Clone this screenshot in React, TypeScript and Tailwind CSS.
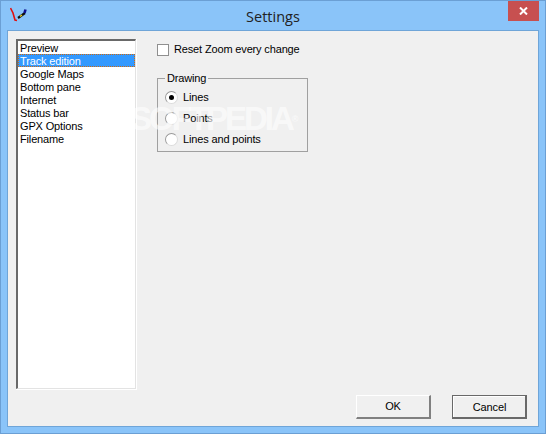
const items = ['Preview', 'Track edition', 'Google Maps', 'Bottom pane', 'Internet', 'Status bar', 'GPX Options', 'Filename'];

function Radio({ label, checked }: { label: string; checked?: boolean }) {
  return (
    <div className="flex items-center h-[13px] gap-[5px]">
      <span className="w-[13px] h-[13px] rounded-full border border-t-[#9a9a9a] border-l-[#9a9a9a] border-r-[#dcdcdc] border-b-[#dcdcdc] bg-white flex items-center justify-center">
        {checked && <span className="w-[5px] h-[5px] rounded-full bg-black" />}
      </span>
      <span>{label}</span>
    </div>
  );
}

function Button({ label, isDefault }: { label: string; isDefault?: boolean }) {
  if (isDefault) {
    return (
      <div className="w-[75px] h-[24px] border border-r-2 border-b-2 border-[#696969] bg-[#f0f0f0]">
        <div className="h-full flex items-center justify-center border-t border-l border-white">{label}</div>
      </div>
    );
  }
  return (
    <div className="w-[75px] h-[24px] flex items-center justify-center bg-[#f0f0f0] border-t border-l border-t-white border-l-white border-r-2 border-b-2 border-r-[#808080] border-b-[#808080]">
      {label}
    </div>
  );
}

export default function App() {
  return (
    <div className="w-[546px] h-[434px] flex flex-col bg-[#8ac4f9] border border-[#6b9fd4] text-[11px] leading-[13px] tracking-[-0.15px] text-black overflow-hidden font-['Liberation_Sans',sans-serif]">
      {/* Title bar */}
      <div className="h-[29px] flex shrink-0">
        <svg className="ml-[9px] mt-[6px]" width="18" height="16" viewBox="0 0 18 16" fill="none">
          <path d="M0.5 1 L3 6 L5 13 L7 13.5" stroke="#e01010" strokeWidth="1.6" />
          <path d="M8 11 L15 6" stroke="#111" strokeWidth="2.2" />
          <path d="M10 9.5 L12 8" stroke="#e8d020" strokeWidth="1.5" />
          <path d="M14.5 6 L15.5 2.5" stroke="#101090" strokeWidth="2.6" />
        </svg>
        <div className="flex-1 flex justify-center pt-[8px] pl-[10px] text-[#222] text-[14.5px] leading-[16px] tracking-normal font-['Open_Sans',sans-serif]">Settings</div>
        <div className="w-[31px] h-[20px] mr-[6px] bg-[#c75050] flex items-center justify-center">
          <svg width="9" height="8" viewBox="0 0 9 8" stroke="#fff" strokeWidth="2" fill="none">
            <path d="M1 0.5 L8 7.5 M8 0.5 L1 7.5" />
          </svg>
        </div>
      </div>

      {/* Client area */}
      <div className="relative mx-[6px] mb-[6px] flex-1 bg-[#f0f0f0] border border-[#6fa5d8] flex flex-col">
        <div className="flex flex-1 pt-[8px] pl-[8px]">
          {/* Category list */}
          <div className="w-[121px] h-[351px] border-r border-b border-white">
            <div className="h-full bg-white border-t-2 border-l-2 border-r border-b border-t-[#696969] border-l-[#696969] border-r-[#e3e3e3] border-b-[#e3e3e3]">
              {items.map((item) => (
                <div
                  key={item}
                  className={
                    item === 'Track edition'
                      ? 'h-[13px] pl-[1px] leading-[13px] bg-[#3399ff] text-white border border-dotted border-[#d06a10]'
                      : 'h-[13px] pl-[2px] leading-[15px]'
                  }
                >
                  {item}
                </div>
              ))}
            </div>
          </div>

          {/* Options */}
          <div className="ml-[20px] pt-[4px] flex flex-col">
            <div className="flex items-center gap-[5px]">
              <span className="w-[12px] h-[12px] bg-white border border-[#8f8f8f]" />
              <span>Reset Zoom every change</span>
            </div>
            <fieldset className="mt-[16px] w-[151px] h-[80px] border border-[#a0a0a0] pl-[7px] pt-[6px] flex flex-col gap-[8px]">
              <legend className="px-[2px]">Drawing</legend>
              <Radio label="Lines" checked />
              <Radio label="Points" />
              <Radio label="Lines and points" />
            </fieldset>
          </div>
        </div>

        {/* Dialog buttons */}
        <div className="flex justify-end gap-[21px] pr-[11px] pb-[7px]">
          <Button label="OK" />
          <Button label="Cancel" isDefault />
        </div>

        {/* Watermark */}
        <div className="absolute left-[122px] top-[70px] text-[33px] leading-[36px] tracking-[-3px] text-white/60 font-bold pointer-events-none">
          SOFTPEDIA<span className="text-[9px] align-top tracking-normal">®</span>
        </div>
      </div>
    </div>
  );
}
